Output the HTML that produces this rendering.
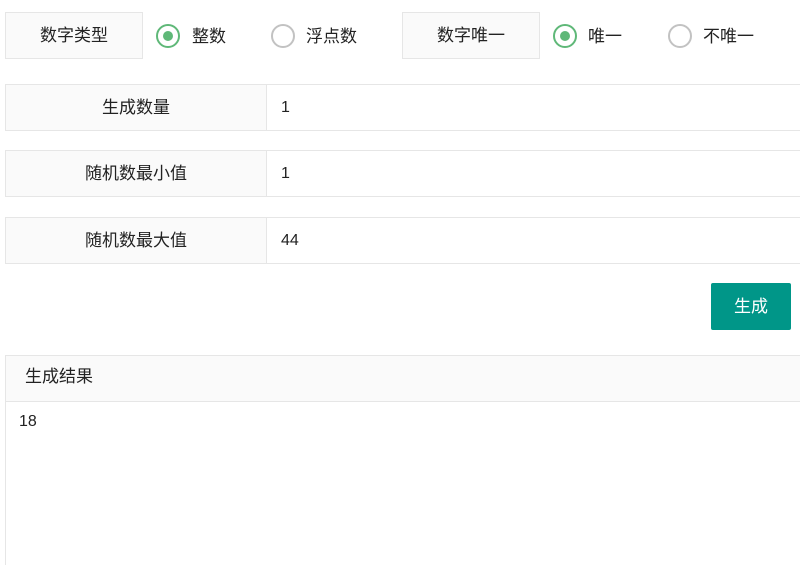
<!DOCTYPE html>
<html><head><meta charset="utf-8"><style>
*{box-sizing:border-box;margin:0;padding:0}
html{width:800px;height:565px;overflow:hidden}
body{width:800px;height:565px;background:#fff;position:relative;overflow:hidden;font-family:"Liberation Sans","Noto Sans CJK SC",sans-serif;font-size:17px;color:#333}
.a{position:absolute}
.lab{position:absolute;background:#fafafa;border:1px solid #e6e6e6;display:flex;align-items:center;justify-content:center;color:#222;padding-bottom:4px}
.rad{position:absolute;width:24px;height:24px;border-radius:50%;border:2px solid #c2c2c2}
.rad.on{border-color:#5fb878}
.rad.on::after{content:"";position:absolute;left:5px;top:5px;width:10px;height:10px;border-radius:50%;background:#5fb878}
.t{position:absolute;line-height:20px;color:#222}
.row{position:absolute;left:5px;width:795px;height:47px;border:1px solid #e6e6e6;border-right:none}
.row .l{position:absolute;left:0;top:0;width:261px;height:45px;background:#fafafa;border-right:1px solid #e6e6e6;display:flex;align-items:center;justify-content:center;color:#222;padding-bottom:4px}
.row .v{position:absolute;left:275px;top:13px;line-height:20px;color:#222;font-size:16px}
</style></head><body>
<div class="lab" style="left:5px;top:12px;width:138px;height:47px">数字类型</div>
<div class="rad on" style="left:156px;top:24px"></div><div class="t" style="left:192px;top:27px">整数</div>
<div class="rad" style="left:271px;top:24px"></div><div class="t" style="left:306px;top:27px">浮点数</div>
<div class="lab" style="left:402px;top:12px;width:138px;height:47px">数字唯一</div>
<div class="rad on" style="left:553px;top:24px"></div><div class="t" style="left:588px;top:27px">唯一</div>
<div class="rad" style="left:668px;top:24px"></div><div class="t" style="left:703px;top:27px">不唯一</div>
<div class="row" style="top:84px"><div class="l">生成数量</div><div class="v">1</div></div>
<div class="row" style="top:150px"><div class="l">随机数最小值</div><div class="v">1</div></div>
<div class="row" style="top:217px"><div class="l">随机数最大值</div><div class="v">44</div></div>
<div class="a" style="left:711px;top:283px;width:80px;height:47px;background:#009688;border-radius:2px;color:#fff;display:flex;align-items:center;justify-content:center;font-size:17px;padding-bottom:4px">生成</div>
<div class="a" style="left:5px;top:355px;width:795px;height:210px;border-left:1px solid #e6e6e6;border-top:1px solid #e6e6e6"></div>
<div class="a" style="left:6px;top:356px;width:794px;height:46px;background:#fafafa;border-bottom:1px solid #e6e6e6"></div>
<div class="t" style="left:25px;top:367px">生成结果</div>
<div class="t" style="left:19px;top:412px;font-size:16px">18</div>
</body></html>
